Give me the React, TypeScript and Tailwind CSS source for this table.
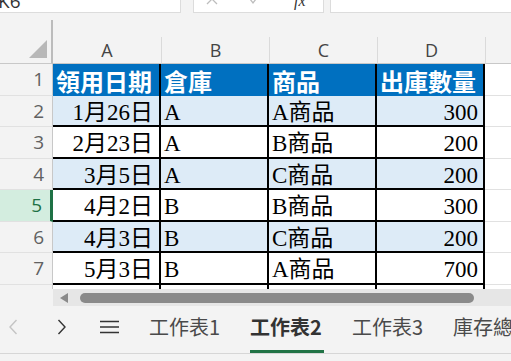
import React from "react";

const rows = [
  { d: "1月26日", b: "A", c: "A商品", n: "300", h: "h-[31px]", bg: "bg-[#ddebf7]", num: "2" },
  { d: "2月23日", b: "A", c: "B商品", n: "200", h: "h-[32px]", bg: "bg-white", num: "3" },
  { d: "3月5日", b: "A", c: "C商品", n: "200", h: "h-[31px]", bg: "bg-[#ddebf7]", num: "4" },
  { d: "4月2日", b: "B", c: "B商品", n: "300", h: "h-[32px]", bg: "bg-white", num: "5" },
  { d: "4月3日", b: "B", c: "C商品", n: "200", h: "h-[31px]", bg: "bg-[#ddebf7]", num: "6" },
  { d: "5月3日", b: "B", c: "A商品", n: "700", h: "h-[32px]", bg: "bg-white", num: "7" },
];

const serif = "font-['Liberation_Serif','Noto_Sans_CJK_TC',serif]";
const ui = "font-['Open_Sans','Noto_Sans_CJK_TC',sans-serif]";

function RowHeader({ num, h }: { num: string; h: string }) {
  const sel = num === "5";
  return (
    <div
      className={`${h} w-[53px] shrink-0 flex items-center justify-end pr-[8px] text-[19px] ${ui} border-b border-[#e1e1e1] ${
        sel
          ? "bg-[#d3eddf] text-[#1e7145] border-r-[3px] border-r-[#1e7145]"
          : "bg-[#f3f3f3] text-[#616161] border-r border-r-[#c8c8c8]"
      }`}
    >
      {num}
    </div>
  );
}

function Tab({ label, active }: { label: string; active?: boolean }) {
  return (
    <div className="relative h-full flex items-center pb-[5px] shrink-0">
      <span className={active ? "font-bold text-[#333]" : "font-normal text-[#4a4a4a]"}>{label}</span>
      {active && <span className="absolute left-0 right-[-2px] bottom-0 h-[3px] bg-[#217346]" />}
    </div>
  );
}

export default function App() {
  return (
    <div className="w-[511px] h-[361px] overflow-hidden bg-[#f3f3f3] flex flex-col">
      {/* formula bar */}
      <div className="h-[13px] flex shrink-0">
        <div className="w-[181px] h-[13px] bg-white border-b border-r border-[#dcdcdc] overflow-hidden relative shrink-0">
          <span className={`absolute left-[-2px] top-[-13px] text-[19px] text-[#333] ${ui}`}>K6</span>
        </div>
        <div className="w-[12px] shrink-0" />
        <div className="w-[131px] h-[13px] bg-white border-b border-x border-[#dcdcdc] overflow-hidden relative shrink-0">
          <svg className="absolute left-[10px] top-[-6px]" width="20" height="14" viewBox="0 0 20 14">
            <path d="M3 0 L13 10 M13 0 L3 10" stroke="#bdbdbd" strokeWidth="1.3" fill="none" />
          </svg>
          <svg className="absolute left-[55px] top-[-6px]" width="12" height="12" viewBox="0 0 12 12">
            <path d="M1 5 L4 9 L10 1" stroke="#bdbdbd" strokeWidth="1.3" fill="none" />
          </svg>
          <span className="absolute left-[100px] top-[-11px] text-[16px] italic font-['Liberation_Serif',serif] text-[#333]">fx</span>
        </div>
        <div className="w-[6px] shrink-0" />
        <div className="flex-1 h-[13px] bg-white border-b border-l border-[#dcdcdc]" />
      </div>

      {/* column headers */}
      <div className="h-[51px] flex shrink-0 pt-[7px]">
        <div className="w-[53px] h-[44px] border-r-2 border-r-[#bcbcbc] border-b border-b-[#c8c8c8] relative shrink-0">
          <svg className="absolute left-[29px] top-[20px]" width="19" height="19" viewBox="0 0 19 19">
            <path d="M18 0 L18 18 L0 18 Z" fill="#b8b8b8" />
          </svg>
        </div>
        {["A", "B", "C", "D", ""].map((l, i) => (
          <div key={i} className={`${i === 4 ? "flex-1" : "w-[108px] shrink-0"} h-[44px] flex flex-col justify-end`}>
            <div
              className={`h-[27px] flex items-center justify-center text-[18px] text-[#444] ${ui} border-b border-b-[#c8c8c8] ${
                i === 0 ? "" : "border-l border-l-[#dadada]"
              }`}
            >
              {l}
            </div>
          </div>
        ))}
      </div>

      {/* row 1 header */}
      <div className="flex h-[32px] shrink-0">
        <RowHeader num="1" h="h-[32px]" />
        {["領用日期", "倉庫", "商品", "出庫數量"].map((t) => (
          <div
            key={t}
            className="w-[108px] shrink-0 h-[32px] bg-[#0070c0] border-r-2 border-black flex items-center pl-[3px] pt-[1px] text-white font-bold text-[24px] leading-none font-['Noto_Sans_CJK_TC',sans-serif]"
          >
            {t}
          </div>
        ))}
        <div className="flex-1 bg-white border-b border-[#e1e1e1]" />
      </div>

      {rows.map((r) => (
        <div key={r.num} className={`flex ${r.h} shrink-0`}>
          <RowHeader num={r.num} h={r.h} />
          <div className={`w-[108px] shrink-0 ${r.bg} border-r-2 border-b-2 border-black flex items-center justify-end pr-[6px] pt-[3px] text-[23px] leading-none text-black ${serif}`}>
            {r.d}
          </div>
          <div className={`w-[108px] shrink-0 ${r.bg} border-r-2 border-b-2 border-black flex items-center pl-[3px] pt-[3px] text-[23px] leading-none text-black ${serif}`}>
            {r.b}
          </div>
          <div className={`w-[108px] shrink-0 ${r.bg} border-r-2 border-b-2 border-black flex items-center pl-[3px] pt-[3px] text-[23px] leading-none text-black ${serif}`}>
            {r.c}
          </div>
          <div className={`w-[108px] shrink-0 ${r.bg} border-r-2 border-b-2 border-black flex items-center justify-end pr-[5px] pt-[3px] text-[23px] leading-none text-black ${serif}`}>
            {r.n}
          </div>
          <div className="flex-1 bg-white border-b border-[#e1e1e1]" />
        </div>
      ))}

      {/* partial row 8 */}
      <div className="flex h-[4px] shrink-0">
        <div className="w-[53px] shrink-0 border-r border-r-[#c8c8c8]" />
        {[0, 1, 2, 3].map((i) => (
          <div key={i} className="w-[108px] shrink-0 bg-white border-r-2 border-black" />
        ))}
        <div className="flex-1 bg-white" />
      </div>

      {/* horizontal scrollbar */}
      <div className="flex h-[17px] shrink-0">
        <div className="w-[53px] shrink-0" />
        <div className="flex-1 bg-[#e6e6e6] flex items-center">
          <svg className="ml-[7px] shrink-0" width="9" height="10" viewBox="0 0 9 10">
            <path d="M8 0 L0 5 L8 10 Z" fill="#8a8a8a" />
          </svg>
          <div className="ml-[11px] w-[394px] h-[10px] rounded-full bg-[#8a8a8a] shrink-0" />
        </div>
      </div>

      {/* sheet tabs */}
      <div className="h-[48px] flex items-center shrink-0 border-b border-[#d6d6d6] overflow-hidden">
        <div className="h-full flex items-center pb-[5px] shrink-0">
          <svg className="ml-[8px] shrink-0" width="10" height="16" viewBox="0 0 10 16">
            <path d="M8.5 1 L2 8 L8.5 15" stroke="#c4c4c4" strokeWidth="1.4" fill="none" />
          </svg>
          <svg className="ml-[39px] shrink-0" width="10" height="16" viewBox="0 0 10 16">
            <path d="M1.5 1 L8 8 L1.5 15" stroke="#333" strokeWidth="1.4" fill="none" />
          </svg>
          <svg className="ml-[33px] shrink-0" width="19" height="14" viewBox="0 0 19 14">
            <path d="M0 1.5 H19 M0 7 H19 M0 12.5 H19" stroke="#333" strokeWidth="1.3" fill="none" />
          </svg>
        </div>
        <div className="ml-[30px] h-full flex items-stretch gap-[30px] text-[20px] font-['Noto_Sans_CJK_TC',sans-serif] whitespace-nowrap shrink-0">
          <Tab label="工作表1" />
          <Tab label="工作表2" active />
          <Tab label="工作表3" />
          <Tab label="庫存總表" />
        </div>
      </div>
      <div className="flex-1" />
    </div>
  );
}
